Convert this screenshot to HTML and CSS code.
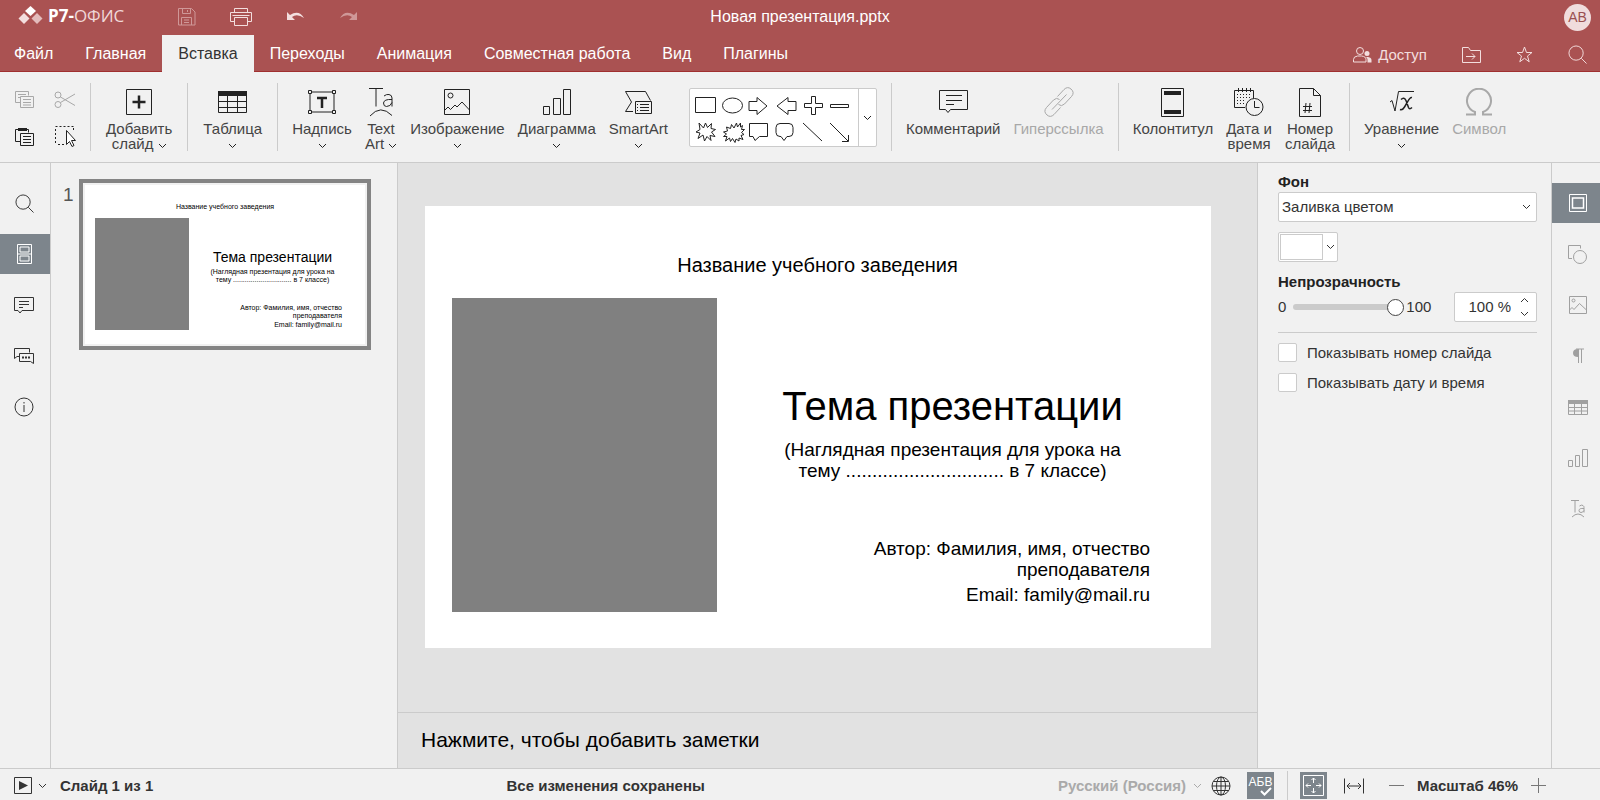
FILE: index.html
```html
<!DOCTYPE html>
<html lang="ru">
<head>
<meta charset="utf-8">
<title>Новая презентация.pptx</title>
<link rel="stylesheet" href="styles.css">
</head>
<body>
<svg class="defs" aria-hidden="true">
  <symbol id="chev" viewBox="0 0 9 6"><path d="M1 1l3.500 3.500L8 1"/></symbol>
  <symbol id="search" viewBox="0 0 20 20"><circle cx="8.500" cy="8.500" r="7.500"/><path d="M14 14l5.500 5.500"/></symbol>
  <symbol id="pic" viewBox="0 0 26 26"><path d="M.5.500h25v25H.5zM.5 21.500l3.500-3.500 2.500 2.500 4.500-4.500 2 2 5-5 7.500 8"/><circle cx="6.500" cy="6.500" r="2.500"/></symbol>
  <symbol id="bars" viewBox="0 0 28 26"><path d="M.5 17.500h6v8h-6zM10.500 9.500h7v16h-7zM20.500.500h7v25h-7z"/></symbol>
  <symbol id="table" viewBox="0 0 29 22"><path d="M.5.500h28v21H.5zM.5 10.500h28M.5 16.500h28M9.500 5v16M19.500 5v16"/><path class="solid" d="M0 0h29v5H0z"/></symbol>
  <symbol id="ta" viewBox="0 0 26 30"><path d="M1 1.500h14M8 1.500v18M16 9q2.500-2 5-1.500 3 .5 3 3.500v8.500M24 12.500q-8-.5-8.500 3.500 0 3.500 3 3.500 4 0 5.500-4M2 29q10.500-12 22-.5"/></symbol>
  <symbol id="comment" viewBox="0 0 29 24"><path d="M.5.500h28v19h-17L9 22.500l-2.500-3h-6zM7 5.500h16M7 10.500h16M7 14.500h8"/></symbol>
</svg>

<header class="top">
  <div class="titlebar">
    <div class="tools">
      <div class="brand">
        <svg width="25" height="19" viewBox="0 0 25 19"><path fill="#fff" d="M12.500 0l5.500 5-5.500 5L7 5z"/><path fill="#f3dede" d="M6 7l5.500 5.500L6 18 .500 12.500z"/><path fill="#e3bcbc" d="M19 7l5.500 5.500L19 18l-5.500-5.500z"/></svg>
        <span class="brand-name"><b>Р7-</b>ОФИС</span>
      </div>
      <div class="quick">
        <button class="dim" aria-label="Сохранить"><svg width="18" height="18" viewBox="0 0 18 18"><path d="M.5.500h13l3.500 3.500v13H.5zM4.500.500v5h8v-5M9.500 2v2M3.500 17V9.500h10V17M6 12h5M6 14.500h5"/></svg></button>
        <button aria-label="Печать"><svg width="22" height="18" viewBox="0 0 22 18"><path d="M4.500 4.500v-4h13v4M4.500 13.500h-4v-9h21v9h-4M2.500 7.500h17M4.500 9.500h13v8h-13z"/></svg></button>
        <button aria-label="Отменить"><svg width="19" height="14" viewBox="0 0 19 14"><path class="solid" d="M1 2v8h8L6 7q5-4 12 1Q13-.500 4 5z"/></svg></button>
        <button class="dim" aria-label="Повторить"><svg width="19" height="14" viewBox="0 0 19 14"><path class="solid" d="M18 2v8h-8l3-3Q8 3 1 8 6-.500 15 5z"/></svg></button>
      </div>
    </div>
    <h1 class="doc">Новая презентация.pptx</h1>
    <div class="user"><button class="avatar">АВ</button></div>
  </div>
  <div class="tabbar">
    <nav class="tabs">
      <button>Файл</button><button>Главная</button><button class="on">Вставка</button><button>Переходы</button><button>Анимация</button><button>Совместная работа</button><button>Вид</button><button>Плагины</button>
    </nav>
    <div class="tab-actions">
      <button class="share"><svg width="19" height="16" viewBox="0 0 19 16"><circle cx="7" cy="4" r="3.500"/><path d="M.5 15v-2.500q0-3 4-3.500h4q4.500.500 4.500 3.500V15z"/><circle class="solid" cx="14" cy="6.500" r="2.500"/><path class="solid" d="M13 10h2q3.500.500 3.500 3v2.500H14.500v-3q0-1.500-1.500-2.500z"/></svg>Доступ</button>
      <button aria-label="Открыть папку"><svg width="19" height="16" viewBox="0 0 19 16"><path d="M.5.500h6l2 3h10v12H.5zM4 9.500h9M10 6.500l3 3-3 3"/></svg></button>
      <button aria-label="Избранное"><svg width="17" height="17" viewBox="0 0 17 17"><path d="M8.500 1l2 5.500H16l-4.500 3.500 1.700 5.800-4.700-3.500-4.700 3.500L5.500 10 1 6.500h5.500z"/></svg></button>
      <button aria-label="Поиск"><svg width="19" height="19"><use href="#search"/></svg></button>
    </div>
  </div>
</header>

<section class="ribbon">
  <div class="clip">
    <button class="off" aria-label="Копировать"><svg width="19" height="18" viewBox="0 0 19 18"><path d="M5 11.500H.5V.500h13v4M3 3.500h8M3 6.500h2M5.500 5.500h13v11h-13zM8 8.500h8M8 11.500h8M8 14h8"/></svg></button>
    <button class="off" aria-label="Вырезать"><svg width="22" height="18" viewBox="0 0 22 18"><circle cx="4" cy="4" r="3"/><circle cx="4" cy="13.500" r="3"/><path d="M6.500 6L21 14.500M6.500 11.500L21 3"/></svg></button>
    <button aria-label="Вставить"><svg width="19" height="19" viewBox="0 0 19 19"><path d="M5 14.500H.5v-12h3M11 2.500h2.500v3M5.500 6.500h13v12h-13zM8 9.500h8M8 12.500h8M8 15.500h8"/><path class="solid" d="M3 1h9v3H3z"/></svg></button>
    <button aria-label="Выделить"><svg width="22" height="22" viewBox="0 0 22 22"><path stroke-dasharray="2 2" d="M1.500 1.500h18M1.500 4v16M19.500 3v4M4 19.500h7"/><path fill="#fff" d="M12.500 5.500v14l3-3 2.500 5 2-1-2.500-5h4z"/></svg></button>
  </div>
  <i class="sep"></i>
  <button class="big"><span class="ic"><svg width="26" height="26" viewBox="0 0 26 26"><path d="M.5.500h25v25H.5z"/><path stroke-width="2.500" d="M13 6.500v13M6.500 13h13"/></svg></span><span>Добавить<br>слайд <svg class="chev"><use href="#chev"/></svg></span></button>
  <i class="sep"></i>
  <button class="big"><span class="ic"><svg width="29" height="22"><use href="#table"/></svg></span><span>Таблица<br><svg class="chev"><use href="#chev"/></svg></span></button>
  <i class="sep"></i>
  <div class="group">
    <button class="big"><span class="ic"><svg width="28" height="24" viewBox="0 0 28 24"><path d="M3 2h22M3 22h22M2 3v18M26 3v18M.5.500h3v3h-3zM24.500.500h3v3h-3zM.5 20.500h3v3h-3zM24.500 20.500h3v3h-3z"/><path stroke-width="2.500" d="M9 8h10M14 8v10"/></svg></span><span>Надпись<br><svg class="chev"><use href="#chev"/></svg></span></button>
    <button class="big"><span class="ic"><svg width="26" height="30"><use href="#ta"/></svg></span><span>Text<br>Art <svg class="chev"><use href="#chev"/></svg></span></button>
    <button class="big"><span class="ic"><svg width="26" height="26"><use href="#pic"/></svg></span><span>Изображение<br><svg class="chev"><use href="#chev"/></svg></span></button>
    <button class="big"><span class="ic"><svg width="28" height="26"><use href="#bars"/></svg></span><span>Диаграмма<br><svg class="chev"><use href="#chev"/></svg></span></button>
    <button class="big"><span class="ic"><svg width="27" height="23" viewBox="0 0 27 23"><path d="M8 20.500H.5l6-9.500-6-10.500h20l5 9M10.500 10.500h16v12h-16zM15 13.500h9M15 16.500h9M15 19.500h9M12 13.500h1M12 16.500h1M12 19.500h1"/></svg></span><span>SmartArt<br><svg class="chev"><use href="#chev"/></svg></span></button>
    <div class="gallery">
      <svg class="shapes" width="168" height="56" viewBox="0 0 168 56">
        <path d="M5.500 8.500h20v15h-20zM59 12.500h8v-4l10 8.500-10 8.500v-4h-8zM106 12.500h-8v-4L87 17l11 8.500v-4h8zM121.500 7.500h4v7h7v4h-7v7h-4v-7h-7v-4h7zM140.500 15.500h18v3h-18z"/>
        <ellipse cx="42.500" cy="16.500" rx="10" ry="7.500"/>
        <path d="M9 34l4.500 5L15.500 34l2 4.500 4-4-.5 5 4.500 1-4 2.500 3.500 4.500-5-1 1 5-4-4-2.500 4.500L13 46l-5 3.500L10 44l-4-1 4-2.500zM44 39l2.500-5 1 4 3-4v4l2-1.500-1 4 3 0-3 3 2.500 2-3 1 2 4-4-1.500 0 3-3-2-1 3.500-2.500-4-2 3-1-3.500-4 3 1.500-4.500-3.500 0 3-2.500-3-2 4-1-1-4 4 1.500 1-4z"/>
        <path d="M59.500 34.500h18v13h-8L65 51.500l-2-4h-3.500zM90 34.500h9q4 0 4 4v5q0 4-4 4h-2l-3 4-3-4h-1q-4 0-4-4v-5q0-4 4-4zM113 34l19 18M140 34l18 18M158.500 46v6.500H152"/>
      </svg>
      <button aria-label="Другие фигуры"><svg class="chev"><use href="#chev"/></svg></button>
    </div>
  </div>
  <i class="sep"></i>
  <div class="group">
    <button class="big"><span class="ic"><svg width="29" height="24"><use href="#comment"/></svg></span><span>Комментарий</span></button>
    <button class="big off"><span class="ic"><svg width="32" height="32" viewBox="0 0 32 32"><path d="M14.500 10.500l6.500-7q3.500-3.500 7-.5 4 3.500.5 7.500l-7 7.500q-3 3-6 .5M17.500 21.500l-6.500 7q-3.500 3.500-7 .5-4-3.500-.5-7.500l7-7.500q3-3 6-.5M9 23.500L23.500 8.500"/></svg></span><span>Гиперссылка</span></button>
  </div>
  <i class="sep"></i>
  <div class="group">
    <button class="big"><span class="ic"><svg width="23" height="29" viewBox="0 0 23 29"><path d="M.5.500h22v28H.5z"/><path class="solid" d="M3 3h17v4H3zM3 22h17v4H3z"/></svg></span><span>Колонтитул</span></button>
    <button class="big"><span class="ic"><svg width="30" height="28" viewBox="0 0 30 28"><path d="M11 19.500H.5v-17h19v8M4.500 0v4M8.500 0v4M12.500 0v4M16.500 0v4"/><path stroke-dasharray="1 2" d="M3 6.500h14M3 9.500h14M3 12.500h9M3 15.500h8"/><circle cx="20.500" cy="19" r="8.500"/><path d="M20.500 13v6.500h5"/></svg></span><span>Дата и<br>время</span></button>
    <button class="big"><span class="ic"><svg width="22" height="29" viewBox="0 0 22 29"><path d="M.5.500h14l7 7v21H.5zM14.500.500v7h7M4 18.500h9M4 22.500h9M7 15l-1 10M11 15l-1 10"/></svg></span><span>Номер<br>слайда</span></button>
  </div>
  <i class="sep"></i>
  <div class="group">
    <button class="big"><span class="ic"><svg width="26" height="22" viewBox="0 0 26 22"><path d="M1 11l2-1.500L6 20 9.500.500H25"/><path stroke-width="1.500" d="M12 8.500q3-3 5 1l2.500 7q1 2.500 3.500 0M23 6.500q-2-.5-4.500 4.500l-3 5q-2 3.500-4.500 2.500"/></svg></span><span>Уравнение<br><svg class="chev"><use href="#chev"/></svg></span></button>
    <button class="big off"><span class="ic"><svg width="28" height="28" viewBox="0 0 28 28"><path stroke-width="2" d="M1 26.500h9v-2.500a12 12 0 1 1 8 0v2.500h9"/></svg></span><span>Символ</span></button>
  </div>
</section>

<main class="work">
  <nav class="rail left">
    <button aria-label="Поиск"><svg width="19" height="19"><use href="#search"/></svg></button>
    <button class="on" aria-label="Слайды"><svg width="15" height="20" viewBox="0 0 15 20"><path d="M.5.500h14v19H.5zM1 10h13M3 3h9v5H3zM3 12h9v5H3z"/></svg></button>
    <button aria-label="Комментарии"><svg width="20" height="17" viewBox="0 0 20 17"><path d="M.5.500h19v13H8l-2 2.500-2-2.500H.5zM5 4.500h10M5 7.500h10M5 10.500h4"/></svg></button>
    <button aria-label="Чат"><svg width="20" height="17" viewBox="0 0 20 17"><path d="M5 8.500H3L.500 10.500V.500h15v4M5.500 5.500h14v10l-3-2h-11z"/><path stroke-width="2" stroke-dasharray="2 1" d="M8 9.500h8"/></svg></button>
    <button aria-label="О программе"><svg width="20" height="20" viewBox="0 0 20 20"><circle cx="10" cy="10" r="9"/><path d="M10 8v7M10 5v1.500"/></svg></button>
  </nav>

  <aside class="thumbs">
    <span class="num">1</span>
    <div class="thumb">
      <div class="slide mini">
        <p class="school">Название учебного заведения</p>
        <div class="body">
          <div class="photo"></div>
          <div class="copy">
            <h2>Тема презентации</h2>
            <p class="sub">(Наглядная презентация для урока на<br>тему .............................. в 7 классе)</p>
            <p class="author">Автор: Фамилия, имя, отчество<br>преподавателя</p>
            <p class="mail">Email: family@mail.ru</p>
          </div>
        </div>
      </div>
    </div>
  </aside>

  <section class="editor">
    <div class="stage">
      <div class="slide full">
        <p class="school">Название учебного заведения</p>
        <div class="body">
          <div class="photo"></div>
          <div class="copy">
            <h2>Тема презентации</h2>
            <p class="sub">(Наглядная презентация для урока на<br>тему .............................. в 7 классе)</p>
            <p class="author">Автор: Фамилия, имя, отчество<br>преподавателя</p>
            <p class="mail">Email: family@mail.ru</p>
          </div>
        </div>
      </div>
    </div>
    <div class="notes">Нажмите, чтобы добавить заметки</div>
  </section>

  <aside class="props">
    <label class="cap" for="fill">Фон</label>
    <div class="pick"><select id="fill"><option>Заливка цветом</option></select><svg class="chev"><use href="#chev"/></svg></div>
    <button class="swatch" aria-label="Цвет фона"><i></i><svg class="chev"><use href="#chev"/></svg></button>
    <label class="cap" for="opacity">Непрозрачность</label>
    <div class="opacity">
      <span>0</span><input id="opacity" type="range" min="0" max="100" value="100"><span>100</span>
      <div class="spin"><input type="text" value="100 %" aria-label="Непрозрачность, %">
        <div><button aria-label="Больше"><svg class="chev" viewBox="0 0 9 6"><path d="M1 5l3.500-3.500L8 5"/></svg></button><button aria-label="Меньше"><svg class="chev"><use href="#chev"/></svg></button></div>
      </div>
    </div>
    <hr>
    <label class="check"><input type="checkbox">Показывать номер слайда</label>
    <label class="check"><input type="checkbox">Показывать дату и время</label>
  </aside>

  <nav class="rail right">
    <button class="on" aria-label="Параметры слайда"><svg width="18" height="18" viewBox="0 0 18 18"><path d="M.5.500h17v17H.5z"/><path stroke-width="1.500" d="M3.500 4h11v10h-11z"/></svg></button>
    <button aria-label="Параметры фигуры"><svg width="19" height="19" viewBox="0 0 19 19"><path d="M4 13.500H.500V.500h12v3"/><circle cx="12" cy="12" r="6.500"/></svg></button>
    <button aria-label="Параметры изображения"><svg width="18" height="18" viewBox="0 0 18 18"><path d="M.5.500h17v17H.5zM.5 14l2.500-2.500 2 2 5.500-6 7 6.500"/><circle cx="4.500" cy="4.500" r="1.500"/></svg></button>
    <button aria-label="Параметры абзаца"><svg width="12" height="16" viewBox="0 0 12 16"><path class="solid" d="M6 1v8Q1 9 1 5t5-4z"/><path d="M4 1h8M6.500 1v14M9.500 1v14"/></svg></button>
    <button aria-label="Параметры таблицы"><svg width="20" height="15" viewBox="0 0 20 15"><path d="M.5.500h19v14H.5zM.5 7.500h19M.5 11h19M6.500 3v12M13.500 3v12"/><path class="solid" d="M0 0h20v4H0z"/></svg></button>
    <button aria-label="Параметры диаграммы"><svg width="20" height="18" viewBox="0 0 20 18"><path d="M.5 11.500h4v6h-4zM7.500 6.500h4v11h-4zM14.500.500h5v17h-5z"/></svg></button>
    <button aria-label="Параметры Text Art"><svg width="16" height="18" viewBox="0 0 16 18"><path d="M1 .5h8M5 .5v12M9.500 6q2-1.500 3.500-.5 1 .5 1 2v5M14 8.500q-5-.5-5 2 0 2 2 2t3-2M2 17q6-6 12 0"/></svg></button>
  </nav>
</main>

<footer class="status">
  <button class="play" aria-label="Показ слайдов"><svg width="18" height="17" viewBox="0 0 18 17"><path d="M.5.500h17v16H.5z"/><path class="solid" d="M5 4l9 4.500L5 13z"/></svg><svg class="chev"><use href="#chev"/></svg></button>
  <span>Слайд 1 из 1</span>
  <span class="saved">Все изменения сохранены</span>
  <button class="lang">Русский (Россия)<svg class="chev"><use href="#chev"/></svg></button>
  <button aria-label="Язык документа"><svg width="20" height="20" viewBox="0 0 20 20"><circle cx="10" cy="10" r="9"/><ellipse cx="10" cy="10" rx="4.500" ry="9"/><path d="M10 1v18M1 10h18M2.500 5.500h15M2.500 14.500h15"/></svg></button>
  <button class="box" aria-label="Проверка орфографии"><span>АБВ</span><svg width="12" height="9" viewBox="0 0 12 9"><path stroke-width="2" d="M1 4l3.500 3.500L11 1"/></svg></button>
  <i class="vr"></i>
  <button class="box" aria-label="По размеру слайда"><svg width="21" height="21" viewBox="0 0 21 21"><path d="M.5.500h20v20H.5zM10.500 3v5M10.500 13v5M3 10.500h5M13 10.500h5M8.500 5l2-2 2 2M8.500 16l2 2 2-2M5 8.500l-2 2 2 2M16 8.500l2 2-2 2"/></svg></button>
  <button class="wide" aria-label="По ширине"><svg width="20" height="16" viewBox="0 0 20 16"><path d="M.5.500v15M19.500.500v15M3 8h14M6 5L3 8l3 3M14 5l3 3-3 3"/></svg></button>
  <button class="minus" aria-label="Уменьшить"><svg width="15" height="15" viewBox="0 0 15 15"><path d="M0 7.500h15"/></svg></button>
  <span>Масштаб 46%</span>
  <button class="plus" aria-label="Увеличить"><svg width="15" height="15" viewBox="0 0 15 15"><path d="M0 7.500h15M7.500 0v15"/></svg></button>
</footer>
</body>
</html>
```

FILE: styles.css
```css
* { box-sizing: border-box; }
body {
  margin: 0;
  height: 100vh;
  display: flex;
  flex-direction: column;
  background: #f1f1f1;
  color: #333;
  font: 15px/18px "Liberation Sans", Arial, sans-serif;
  overflow: hidden;
}
button {
  margin: 0;
  padding: 0;
  border: 0;
  background: none;
  color: inherit;
  font: inherit;
  display: flex;
  align-items: center;
  justify-content: center;
}
p, h1, h2 { margin: 0; font-weight: 400; }
svg { fill: none; stroke: currentColor; display: block; flex: none; }
.solid { fill: currentColor; stroke: none; }
.defs { position: absolute; width: 0; height: 0; }
.chev { width: 9px; height: 6px; }

/* header */
.top { background: #aa5252; color: #fff; border-bottom: 1px solid #a03030; flex: none; }
.titlebar { display: grid; grid-template-columns: 1fr auto 1fr; height: 35px; align-items: center; padding: 0 9px; }
.tools { display: grid; grid-template-columns: 169px auto; align-items: center; justify-content: start; }
.brand { display: flex; gap: 5px; padding: 0 0 4px 9px; align-items: center; }
.brand svg { stroke: none; }
.brand-name { font: 17px/20px "Open Sans", "Noto Sans", sans-serif; color: #f0d8d8; }
.brand-name b { color: #fff; }
.quick { display: flex; gap: 34px; align-items: center; color: #f3dede; padding-bottom: 2px; }
.quick .dim { color: #cf9898; }
.doc { font-size: 16px; padding-bottom: 2px; }
.user { display: flex; justify-content: flex-end; padding-bottom: 1px; }
.avatar { width: 27px; height: 27px; border-radius: 50%; background: #f0dcdc; color: #9a5050; font-size: 14px; }
.tabbar { display: flex; justify-content: space-between; height: 36px; font-size: 16px; }
.tabs { display: flex; margin-bottom: -1px; }
.tabs button { padding: 0 16px; }
.tabs button:first-child { padding-left: 14px; }
.tabs .on { background: #f1f1f1; color: #333; }
.tab-actions { display: flex; gap: 35px; padding: 3px 13px 0 0; align-items: center; color: #f3dede; }
.share { gap: 6px; font-size: 15px; }

/* ribbon */
.ribbon {
  display: flex;
  gap: 14px;
  height: 91px;
  flex: none;
  padding: 10px 15px;
  border-bottom: 1px solid #cbcbcb;
  color: #444;
}
.ribbon svg { color: #222; }
.ribbon .off, .ribbon .off svg { color: #a8a8a8; }
.group { display: flex; gap: 13px; }
.clip { display: grid; grid-template-columns: 19px 22px; column-gap: 20px; grid-auto-rows: 36px; align-items: center; }
.sep { width: 1px; flex: none; background: #cbcbcb; margin: 1px 0; }
.big { flex-direction: column; justify-content: flex-start; padding-top: 4px; line-height: 15px; gap: 3px; }
.ribbon > .big { padding-left: 1px; padding-right: 1px; }
.ic { height: 32px; display: flex; align-items: center; }
.big .chev { display: inline-block; vertical-align: 0; }
.gallery { display: flex; height: 59px; margin: 6px 0 0 8px; background: #fff; border: 1px solid #cbcbcb; border-radius: 2px; }
.gallery button { width: 18px; border-left: 1px solid #cbcbcb; }

/* workspace */
.work { flex: 1; display: flex; min-height: 0; }
.rail { display: flex; flex-direction: column; gap: 11px; padding-top: 20px; flex: none; }
.rail button { height: 40px; }
.rail .on { background: #7d858c; color: #fff; }
.left { width: 51px; border-right: 1px solid #cbcbcb; }
.left button { padding-right: 2px; }
.right { width: 49px; border-left: 1px solid #cbcbcb; color: #a0a0a0; }
.right button { padding-left: 3px; }
.thumbs { width: 347px; flex: none; display: flex; align-items: flex-start; padding: 16px 26px 0 12px; gap: 6px; border-right: 1px solid #cbcbcb; }
.num { font-size: 19px; line-height: 32px; width: 10px; color: #555; }
.thumb { flex: 1; border: 4px solid #848484; padding: 2px; }
.editor { flex: 1; display: flex; flex-direction: column; background: #e2e2e2; min-width: 0; }
.stage { flex: 1; padding: 43px 46px 0 27px; }
.notes { border-top: 1px solid #cbcbcb; height: 56px; padding-left: 23px; line-height: 54px; font-size: 21px; color: #000; }

/* slides */
.slide { background: #fff; color: #000; display: flex; flex-direction: column; }
.photo { background: #808080; flex: none; }
.school, .sub, h2 { text-align: center; }
.author, .mail { text-align: right; }
.body { display: flex; }
.copy { flex: 1; }
.full { height: 442px; padding: 46px 61px 0 27px; font-size: 19px; line-height: 21px; }
.full .school { font-size: 20px; line-height: 26px; padding-bottom: 20px; margin-right: -33px; }
.full .photo { width: 265px; height: 314px; }
.full .copy { padding-left: 38px; }
.full h2 { font-size: 40px; line-height: 46px; padding: 85px 0 10px; }
.full .author { padding-top: 57px; }
.full .mail { padding-top: 4px; }
.mini { height: 159px; padding: 17px 23px 0 10px; font-size: 7px; line-height: 8px; white-space: nowrap; }
.mini .school { line-height: 9px; padding-bottom: 7px; margin-right: -13px; }
.mini .photo { width: 94px; height: 112px; }
.mini h2 { font-size: 14px; line-height: 16px; padding: 31px 0 3px; }
.mini .copy { padding-left: 14px; }
.mini .author { padding-top: 20px; }
.mini .mail { padding-top: 1px; }

/* properties */
.props { width: 294px; flex: none; border-left: 1px solid #cbcbcb; padding: 9px 14px 0 20px; display: flex; flex-direction: column; }
.cap { font-weight: 700; line-height: 20px; color: #222; }
.pick { display: flex; align-items: center; height: 30px; background: #fff; border: 1px solid #cbcbcb; border-radius: 2px; padding-right: 5px; }
.pick select { appearance: none; flex: 1; border: 0; padding: 0 3px; background: none; color: #333; font: inherit; }
.swatch { width: 60px; height: 30px; margin: 10px 0; background: #fff; border: 1px solid #cbcbcb; border-radius: 2px; justify-content: flex-start; gap: 3px; }
.swatch i { width: 43px; height: 26px; margin-left: 1px; border: 1px solid #cbcbcb; }
.opacity { display: flex; align-items: center; height: 30px; gap: 2px; }
.opacity input[type="range"] { appearance: none; width: 116px; margin: 0; padding: 0 0 0 5px; height: 17px; background: none; }
.opacity input[type="range"]::-webkit-slider-runnable-track { height: 6px; border-radius: 3px; background: #cbcbcb; }
.opacity input[type="range"]::-webkit-slider-thumb { appearance: none; width: 17px; height: 17px; margin-top: -5px; border: 1px solid #444; border-radius: 50%; background: #fff; }
.spin { display: flex; width: 83px; height: 30px; margin-left: auto; background: #fff; border: 1px solid #cbcbcb; border-radius: 2px; }
.spin input { flex: 1; min-width: 0; border: 0; padding: 0; background: none; text-align: right; font: inherit; color: #333; }
.spin div { display: flex; flex-direction: column; justify-content: space-around; padding: 0 7px 0 9px; }
hr { border: 0; border-top: 1px solid #cbcbcb; margin: 10px 0; width: 100%; }
.check { display: flex; align-items: center; gap: 10px; height: 19px; margin-bottom: 11px; }
.check input { appearance: none; width: 19px; height: 19px; margin: 0; background: #fff; border: 1px solid #cbcbcb; border-radius: 2px; }

/* status bar */
.status { height: 32px; flex: none; display: flex; align-items: center; border-top: 1px solid #cbcbcb; padding: 2px 54px 0 14px; font-weight: 700; }
.play { gap: 6px; margin-right: 13px; }
.saved { flex: 1; text-align: center; }
.lang { color: #aaa; gap: 7px; margin-right: 9px; }
.box { position: relative; width: 27px; height: 27px; background: #7d858c; color: #fff; }
.box span { font-size: 12px; font-weight: 400; padding-bottom: 8px; }
.box span + svg { position: absolute; right: 2px; bottom: 3px; }
.lang ~ .box { margin-left: 16px; }
.vr { width: 1px; height: 100%; background: #cbcbcb; margin-left: 13px; }
.vr ~ .box { margin-left: 12px; }
.wide { margin: 0 25px 0 17px; }
.minus, .plus { color: #777; }
.minus { margin-right: 13px; }
.plus { margin-left: 13px; }
```
